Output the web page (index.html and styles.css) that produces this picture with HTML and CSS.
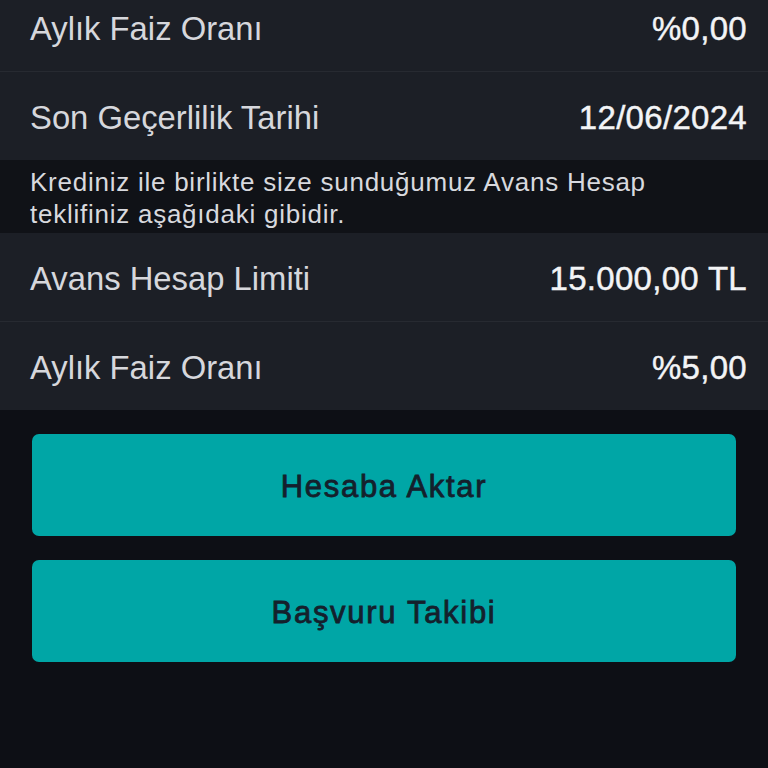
FILE: index.html
```html
<!DOCTYPE html>
<html lang="tr">
<head>
<meta charset="utf-8">
<title>Avans Hesap</title>
<link rel="stylesheet" href="styles.css">
</head>
<body>
<div class="screen">
  <div class="list">
    <div class="row">
      <span class="label">Aylık Faiz Oranı</span>
      <span class="value">%0,00</span>
    </div>
    <div class="row">
      <span class="label">Son Geçerlilik Tarihi</span>
      <span class="value">12/06/2024</span>
    </div>
    <p class="info">Krediniz ile birlikte size sunduğumuz Avans Hesap teklifiniz aşağıdaki gibidir.</p>
    <div class="row">
      <span class="label">Avans Hesap Limiti</span>
      <span class="value">15.000,00 TL</span>
    </div>
    <div class="row">
      <span class="label">Aylık Faiz Oranı</span>
      <span class="value">%5,00</span>
    </div>
  </div>
  <div class="actions">
    <button class="btn" type="button">Hesaba Aktar</button>
    <button class="btn" type="button">Başvuru Takibi</button>
  </div>
</div>
</body>
</html>
```
FILE: styles.css
```css
html, body {
  margin: 0;
  padding: 0;
  background: #0d0f15;
}
body {
  width: 768px;
  height: 768px;
  overflow: hidden;
  font-family: "Liberation Sans", Arial, sans-serif;
}
.screen {
  display: flex;
  flex-direction: column;
}
.list {
  display: flex;
  flex-direction: column;
  margin-top: -17px;
}
.row {
  display: flex;
  align-items: center;
  justify-content: space-between;
  height: 88px;
  padding: 4px 21px 0 30px;
  background: #1c1f26;
  box-sizing: border-box;
}
.row + .row {
  border-top: 1px solid #272a31;
  height: 89px;
}
.label {
  font-size: 32.8px;
  color: #d6d7dc;
}
.value {
  font-size: 33px;
  letter-spacing: 0.3px;
  color: #f3f4f6;
  -webkit-text-stroke: 0.45px #f3f4f6;
}
.info {
  margin: 0;
  padding: 6px 30px 3px 30px;
  background: #101217;
  color: #d8d9de;
  font-size: 26px;
  line-height: 32px;
  letter-spacing: 0.75px;
}
.actions {
  display: flex;
  flex-direction: column;
  gap: 24px;
  padding: 24px 32px 0 32px;
}
.btn {
  height: 102px;
  border: none;
  border-radius: 7px;
  background: #00a6a6;
  color: #14202c;
  font-family: "Liberation Sans", Arial, sans-serif;
  font-size: 31px;
  letter-spacing: 1.7px;
  -webkit-text-stroke: 0.8px #14202c;
  padding: 4px 0 0 0;
}
```
